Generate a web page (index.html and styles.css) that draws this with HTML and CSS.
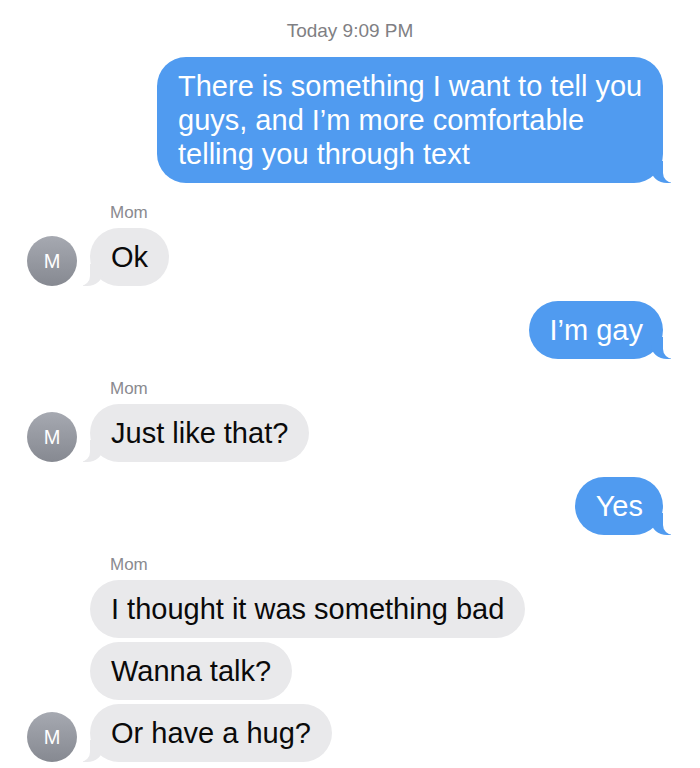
FILE: index.html
```html
<!DOCTYPE html>
<html>
<head>
  <meta charset="UTF-8">
  <title>Messages</title>
  <link rel="stylesheet" href="styles.css">
</head>
<body>
<div class="thread">
  <div class="stamp">Today 9:09 PM</div>

  <div class="out">
    <div class="bubble sent tail">There is something I want to tell you guys, and I’m more comfortable telling you through text</div>
  </div>

  <div class="in">
    <div class="avatar">M</div>
    <div class="stack">
      <div class="sender">Mom</div>
      <div class="bubble recv tail">Ok</div>
    </div>
  </div>

  <div class="out">
    <div class="bubble sent tail">I’m gay</div>
  </div>

  <div class="in">
    <div class="avatar">M</div>
    <div class="stack">
      <div class="sender">Mom</div>
      <div class="bubble recv tail">Just like that?</div>
    </div>
  </div>

  <div class="out">
    <div class="bubble sent tail">Yes</div>
  </div>

  <div class="in">
    <div class="avatar">M</div>
    <div class="stack">
      <div class="sender">Mom</div>
      <div class="bubble recv">I thought it was something bad</div>
      <div class="bubble recv">Wanna talk?</div>
      <div class="bubble recv tail">Or have a hug?</div>
    </div>
  </div>
</div>
</body>
</html>
```

FILE: styles.css
```css
body {
	margin: 0;
	padding: 0;
	background-color: white;
	font-family: "Liberation Sans", Arial, sans-serif;
}
.thread {
	width: 700px;
	padding: 19px 37px 0 27px;
	box-sizing: border-box;
}
.stamp {
	text-align: center;
	font-size: 19px;
	line-height: 23px;
	color: #7f7f84;
	padding-left: 10px;
}

/* outgoing */
.out {
	display: flex;
	flex-direction: column;
	align-items: flex-end;
	margin-top: 15px;
}

/* incoming: avatar + column of bubbles */
.in {
	display: flex;
	align-items: flex-end;
	gap: 13px;
	margin-top: 20px;
}
.stack {
	display: flex;
	flex-direction: column;
	align-items: flex-start;
	gap: 4px;
}
.sender {
	font-size: 17px;
	line-height: 20px;
	color: #8a8a8f;
	padding-left: 20px;
	margin-bottom: 1px;
}

.bubble {
	position: relative;
	box-sizing: border-box;
	max-width: 506px;
	padding: 12px 21px 12px 21px;
	border-radius: 29px;
	font-size: 29px;
	line-height: 34px;
}
.sent {
	background-color: #509bf0;
	color: white;
	padding-right: 20px;
}
.recv {
	background-color: #e9e9eb;
	color: #0a0a0a;
}

/* bubble tails */
.sent.tail::before {
	content: "";
	position: absolute;
	bottom: 0;
	right: -8px;
	width: 20px;
	height: 22px;
	background-color: #509bf0;
	border-bottom-left-radius: 16px 14px;
}
.sent.tail::after {
	content: "";
	position: absolute;
	bottom: 0;
	right: -12px;
	width: 12px;
	height: 22px;
	background-color: white;
	border-bottom-left-radius: 10px;
}
.recv.tail::before {
	content: "";
	position: absolute;
	bottom: 0;
	left: -7px;
	width: 20px;
	height: 22px;
	background-color: #e9e9eb;
	border-bottom-right-radius: 16px 14px;
}
.recv.tail::after {
	content: "";
	position: absolute;
	bottom: 0;
	left: -12px;
	width: 12px;
	height: 22px;
	background-color: white;
	border-bottom-right-radius: 10px;
}

.avatar {
	flex: none;
	width: 50px;
	height: 50px;
	border-radius: 50%;
	background: linear-gradient(#a6a9b1, #868991);
	color: white;
	font-size: 20px;
	display: flex;
	align-items: center;
	justify-content: center;
}
```
